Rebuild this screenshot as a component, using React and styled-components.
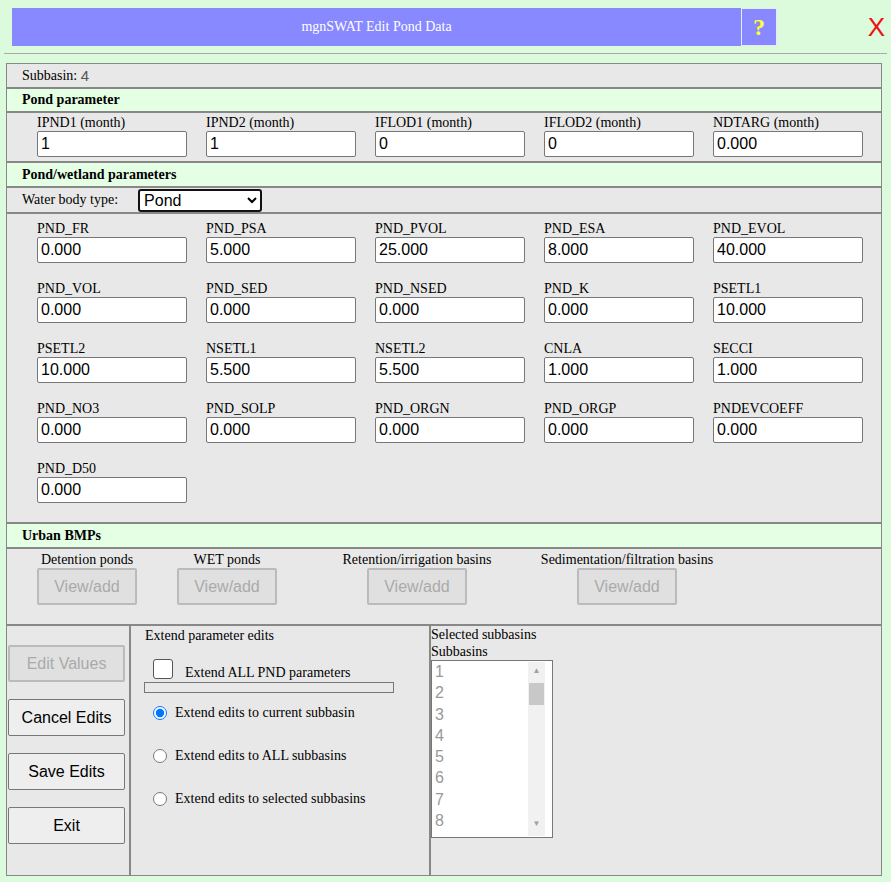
import React from 'react';
import styled, { createGlobalStyle } from 'styled-components';

const Global = createGlobalStyle`
  body { margin: 0; background: #dcfadc; font-family: "Liberation Serif", serif; }
`;

const Page = styled.div`
  width: 891px;
  height: 882px;
  padding: 8px 4px 0 6px;
  box-sizing: border-box;
`;

const TopBar = styled.div`
  display: flex;
  align-items: center;
  height: 38px;
`;

const Title = styled.div`
  width: 729px;
  margin-left: 6px;
  height: 38px;
  background: #8888ff;
  color: #fff;
  font-size: 14px;
  display: flex;
  align-items: center;
  justify-content: center;
`;

const Help = styled.div`
  width: 34px;
  height: 36px;
  border: 1px solid #e8e8ff;
  background: #8888ff;
  color: #ffff33;
  font-size: 24px;
  font-weight: bold;
  display: flex;
  align-items: center;
  justify-content: center;
`;

const Close = styled.div`
  margin-left: auto;
  margin-right: 2px;
  color: #ee1111;
  font-family: "Liberation Sans", sans-serif;
  font-size: 26px;
`;

const Rule = styled.div`
  height: 1px;
  background: #aaa;
  margin: 7px 0 9px -2px;
`;

const Panel = styled.div`
  width: 874px;
  border: 1px solid #888;
  background: #e8e8e8;
`;

const Row = styled.div`
  border-bottom: 2px solid #888;
  padding: ${p => p.pad || '0 15px'};
  height: ${p => p.h}px;
  box-sizing: border-box;
  display: flex;
  align-items: center;
  font-size: 14px;
  background: ${p => (p.green ? '#e4ffe4' : '#e8e8e8')};
  font-weight: ${p => (p.green ? 'bold' : 'normal')};
`;

const Grid = styled.div`
  display: grid;
  grid-template-columns: repeat(5, 150px);
  column-gap: 19px;
  row-gap: 8px;
  padding: ${p => p.pad};
  border-bottom: 2px solid #888;
  height: ${p => p.h}px;
  box-sizing: border-box;
  align-content: start;
`;

const Field = styled.label`
  display: flex;
  flex-direction: column;
  font-size: 14px;
  line-height: 16px;
  padding-left: ${p => p.shift || 0}px;
`;

const Input = styled.input`
  width: 150px;
  height: 26px;
  box-sizing: border-box;
  margin: 0 0 0 ${p => -(p.shift || 0)}px;
  border: 1px solid #777;
  border-radius: 2px;
  font-family: "Liberation Sans", sans-serif;
  font-size: 16px;
  padding: 0 3px;
`;

const Select = styled.select`
  margin-left: 20px;
  width: 124px;
  height: 23px;
  font-family: "Liberation Sans", sans-serif;
  font-size: 16px;
  border: 2px solid #111;
  border-radius: 3px;
  background: #fff;
`;

const Bmps = styled.div`
  display: flex;
  height: 77px;
  border-bottom: 2px solid #888;
  padding-left: 30px;
  box-sizing: border-box;
`;

const Bmp = styled.div`
  display: flex;
  flex-direction: column;
  align-items: center;
  width: ${p => p.w}px;
  font-size: 14px;
  padding-top: 3px;
`;

const Btn = styled.button`
  width: ${p => p.w || 100}px;
  height: ${p => p.h || 37}px;
  margin-top: ${p => p.mt || 0}px;
  font-family: "Liberation Sans", sans-serif;
  font-size: 16px;
  color: ${p => (p.disabled ? '#aaa' : '#000')};
  background: ${p => (p.disabled ? '#e0e0e0' : '#eee')};
  border: ${p => (p.disabled ? '2px solid #bbb' : '1px solid #777')};
  border-radius: 2px;
`;

const Bottom = styled.div`
  display: flex;
  height: 249px;
`;

const Side = styled.div`
  width: 124px;
  border-right: 2px solid #888;
  display: flex;
  flex-direction: column;
  gap: 17px;
  padding: 19px 0 0 1px;
  box-sizing: border-box;
`;

const Middle = styled.div`
  width: 300px;
  border-right: 2px solid #888;
  padding: 1px 0 0 14px;
  box-sizing: border-box;
  font-size: 14px;
`;

const Choice = styled.label`
  display: flex;
  align-items: center;
  gap: 8px;
  margin: ${p => p.m};
  input { margin: 0 0 0 8px; width: 14px; height: 14px; }
`;

const Box = styled.span`
  width: 18px;
  height: 18px;
  border: 1px solid #555;
  border-radius: 3px;
  background: #fff;
  margin: -8px 4px 0 8px;
`;

const Bar = styled.div`
  width: 248px;
  height: 9px;
  border: 1px solid #777;
  margin: 1px 0 0 -1px;
`;

const Right = styled.div`
  padding: 0 0 0 4px;
  font-size: 14px;
  line-height: 17px;
`;

const List = styled.div`
  width: 120px;
  height: 176px;
  border: 1px solid #777;
  background: #fff;
  display: flex;
  margin-left: -4px;
  overflow: hidden;
`;

const Items = styled.div`
  flex: 1;
  font-family: "Liberation Sans", sans-serif;
  font-size: 16px;
  color: #999;
  line-height: 21.3px;
  padding-left: 3px;
`;

const Scroll = styled.div`
  width: 17px;
  margin: 1px 7px 1px 0;
  background: #f1f1f1;
  position: relative;
  font-size: 8px;
  color: #a0a0a0;
  text-align: center;
`;

const Thumb = styled.div`
  position: absolute;
  left: 1px;
  top: 21px;
  width: 15px;
  height: 22px;
  background: #c8c8c8;
`;

const top = [
  ['IPND1 (month)', '1'],
  ['IPND2 (month)', '1'],
  ['IFLOD1 (month)', '0'],
  ['IFLOD2 (month)', '0'],
  ['NDTARG (month)', '0.000'],
];

const pond = [
  ['PND_FR', '0.000'], ['PND_PSA', '5.000'], ['PND_PVOL', '25.000'], ['PND_ESA', '8.000'], ['PND_EVOL', '40.000'],
  ['PND_VOL', '0.000'], ['PND_SED', '0.000'], ['PND_NSED', '0.000'], ['PND_K', '0.000'], ['PSETL1', '10.000'],
  ['PSETL2', '10.000'], ['NSETL1', '5.500'], ['NSETL2', '5.500'], ['CNLA', '1.000'], ['SECCI', '1.000'],
  ['PND_NO3', '0.000'], ['PND_SOLP', '0.000'], ['PND_ORGN', '0.000'], ['PND_ORGP', '0.000'], ['PNDEVCOEFF', '0.000'],
  ['PND_D50', '0.000'],
];

export default function App() {
  return (
    <Page>
      <Global />
      <TopBar>
        <Title>mgnSWAT Edit Pond Data</Title>
        <Help>?</Help>
        <Close>X</Close>
      </TopBar>
      <Rule />
      <Panel>
        <Row h={25}>Subbasin:&nbsp; <span style={{ fontFamily: 'Liberation Sans', fontSize: 15, color: '#555' }}>4</span></Row>
        <Row h={24} green>Pond parameter</Row>
        <Grid pad="2px 0 0 30px" h={50}>
          {top.map(([l, v]) => (
            <Field key={l} shift={l.startsWith('IF') || l.startsWith('ND') ? 0 : 0}>
              {l}
              <Input defaultValue={v} />
            </Field>
          ))}
        </Grid>
        <Row h={25} green>Pond/wetland parameters</Row>
        <Row h={26}>Water body type: <Select defaultValue="Pond"><option>Pond</option></Select></Row>
        <Grid pad="7px 0 0 30px" h={310} style={{ rowGap: 18 }}>
          {pond.map(([l, v]) => (
            <Field key={l}>
              {l}
              <Input defaultValue={v} />
            </Field>
          ))}
        </Grid>
        <Row h={25} green>Urban BMPs</Row>
        <Bmps>
          <Bmp w={100}>Detention ponds<Btn disabled>View/add</Btn></Bmp>
          <Bmp w={180}>WET ponds<Btn disabled>View/add</Btn></Bmp>
          <Bmp w={200}>Retention/irrigation basins<Btn disabled>View/add</Btn></Bmp>
          <Bmp w={220}>Sedimentation/filtration basins<Btn disabled>View/add</Btn></Bmp>
        </Bmps>
        <Bottom>
          <Side>
            <Btn w={117} disabled>Edit Values</Btn>
            <Btn w={117}>Cancel Edits</Btn>
            <Btn w={117}>Save Edits</Btn>
            <Btn w={117}>Exit</Btn>
          </Side>
          <Middle>
            <div style={{ marginTop: 1 }}>Extend parameter edits</div>
            <Choice m="21px 0 0 0"><Box />Extend ALL PND parameters</Choice>
            <Bar />
            <Choice m="12px 0 0 0"><input type="radio" name="e" defaultChecked />Extend edits to current subbasin</Choice>
            <Choice m="27px 0 0 0"><input type="radio" name="e" />Extend edits to ALL subbasins</Choice>
            <Choice m="27px 0 0 0"><input type="radio" name="e" />Extend edits to selected subbasins</Choice>
          </Middle>
          <Right>
            <div style={{ marginLeft: -4 }}>Selected subbasins<br />Subbasins</div>
            <List>
              <Items>{[1, 2, 3, 4, 5, 6, 7, 8].map(n => <div key={n}>{n}</div>)}</Items>
              <Scroll>▲<Thumb /><div style={{ position: 'absolute', bottom: 4, width: '100%' }}>▼</div></Scroll>
            </List>
          </Right>
        </Bottom>
      </Panel>
    </Page>
  );
}
